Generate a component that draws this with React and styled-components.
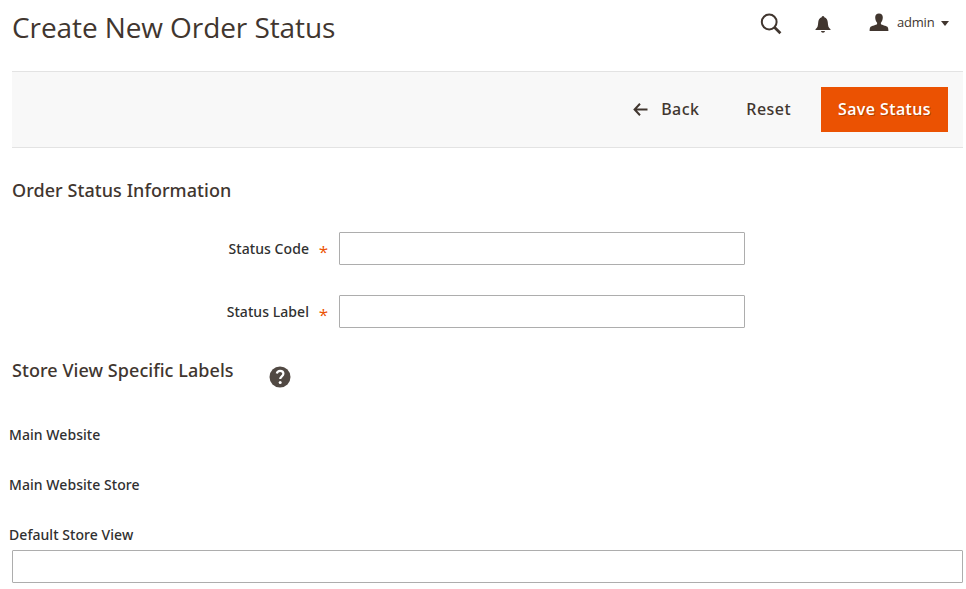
import React from 'react';
import styled, { createGlobalStyle } from 'styled-components';

const Global = createGlobalStyle`
  * { box-sizing: border-box; }
  body { margin: 0; background: #fff; color: #303030; font-family: "Open Sans", "Noto Sans", sans-serif; font-size: 14px; }
`;
const Page = styled.main`
  height: 589px;
  overflow: hidden;
  display: flex;
  flex-direction: column;
`;
const Header = styled.header`
  height: 71px;
  flex: none;
  display: flex;
  justify-content: space-between;
  padding: 0 17px 0 12px;
`;
const Title = styled.h1`
  margin: 7px 0 0;
  font-size: 28px;
  line-height: 40px;
  font-weight: 400;
  letter-spacing: -.09px;
  color: #41362f;
`;
const Tools = styled.div`
  display: flex;
  align-items: flex-start;
  padding-top: 13px;
  color: #41362f;
`;
const SearchIcon = styled.svg`
  width: 22px;
  height: 22px;
  margin-right: 33px;
`;
const BellIcon = styled.svg`
  width: 16px;
  height: 18px;
  margin: 3px 38px 0 0;
`;
const Admin = styled.div`
  display: flex;
  align-items: flex-start;
  font-size: 13px;
  line-height: 18px;
`;
const UserIcon = styled.svg`
  width: 20px;
  height: 18px;
  margin-right: 8px;
`;
const UserName = styled.span`
  width: 38px;
  font-weight: 400;
  letter-spacing: -.2px;
`;
const Caret = styled.svg`
  width: 8px;
  height: 5px;
  margin: 8px 0 0 6px;
`;
const Bar = styled.div`
  height: 77px;
  flex: none;
  margin: 0 3px 0 12px;
  padding-right: 15px;
  background: #f8f8f8;
  border-top: 1px solid #e3e3e3;
  border-bottom: 1px solid #e3e3e3;
  display: flex;
  align-items: center;
  justify-content: flex-end;
`;
const Action = styled.button`
  border: 0;
  background: none;
  padding: 0 0 2px;
  margin-right: ${p => p.$gap}px;
  font: 500 16px/24px "Noto Sans", sans-serif;
  letter-spacing: .45px;
  color: #41362f;
  display: flex;
  align-items: center;
`;
const BackArrow = styled.svg`
  width: 15px;
  height: 13px;
  margin: 1px 13px 0 0;
`;
const Save = styled(Action)`
  width: 127px;
  height: 45px;
  margin: 0;
  background: #eb5202;
  color: #fff;
  font-family: "Open Sans", sans-serif;
  font-weight: 600;
  letter-spacing: .4px;
  text-shadow: 1px 1px 0 rgba(0, 0, 0, .25);
  justify-content: center;
`;
const Section = styled.section`
  padding: 30px 3px 0 12px;
`;
const Heading = styled.h2`
  margin: 0;
  font-family: "Noto Sans", sans-serif;
  font-size: 18px;
  line-height: 24px;
  font-weight: 500;
  letter-spacing: .06px;
  color: #41362f;
`;
const Field = styled.label`
  display: flex;
  align-items: center;
  height: 33px;
  margin-top: 30px;
`;
const Name = styled.span`
  width: 297px;
  text-align: right;
  font-family: "Noto Sans", sans-serif;
  font-weight: 500;
  letter-spacing: .06px;
`;
const Star = styled.span`
  width: 30px;
  padding: 7px 1px 0 0;
  text-align: center;
  font-size: 17px;
  line-height: 20px;
  color: #eb5202;
`;
const Input = styled.input`
  display: block;
  width: ${p => p.$wide ? '100%' : '406px'};
  height: 33px;
  border: 1px solid #adadad;
  border-radius: 1px;
  background: #fff;
`;
const HeadingRow = styled.div`
  display: flex;
  align-items: flex-start;
`;
const HelpIcon = styled.svg`
  width: 22px;
  height: 22px;
  margin: 8px 0 0 35px;
`;
const StoreLabels = styled.div`
  display: grid;
  grid-auto-rows: 20px;
  row-gap: 30px;
  margin: 37px 0 5px -3px;
`;
const StoreLabel = styled.div`
  line-height: 20px;
  font-family: "Noto Sans", sans-serif;
  font-weight: 500;
  letter-spacing: .06px;
`;

export default function App() {
  return (
    <>
      <Global />
      <Page>
        <Header>
          <Title>Create New Order Status</Title>
          <Tools>
            <SearchIcon viewBox="0 0 22 22" fill="none" stroke="currentColor">
              <circle cx="9.2" cy="9" r="7.4" strokeWidth="2" />
              <path d="M14.4 14.2 20.4 20.200" strokeWidth="2.7" />
            </SearchIcon>
            <BellIcon viewBox="0 0 16 18" fill="currentColor">
              <path d="M8 0C6.9 0 6.7 1 6.7 1.3 4.3 2 3.4 4 3.2 6.4 3 10 2.5 11.5.5 13.3V14h15v-.7c-2-1.8-2.5-3.3-2.7-6.9-.2-2.4-1.1-4.4-3.5-5.1C9.3 1 9.1 0 8 0ZM6 15h4c-.2 1-.9 1.7-2 1.7S6.200 16 6 15Z" />
            </BellIcon>
            <Admin>
              <UserIcon viewBox="0 0 20 18" fill="currentColor">
                <path d="M10 .4C7.600.4 6.200 1.900 6.200 4.300c0 2.500.9 4.300 1.900 5.400v1.200c-.8 1.100-5.200 1.800-6.500 2.800C.9 14.300.600 16 .600 18h18.800c0-2-.3-3.700-1-4.300-1.300-1-5.700-1.700-6.500-2.800V9.700c1-1.100 1.900-2.900 1.900-5.400C13.800 1.900 12.400.4 10 .4Z" />
              </UserIcon>
              <UserName>admin</UserName>
              <Caret viewBox="0 0 8 5" fill="currentColor"><path d="M0 0h8L4 5Z" /></Caret>
            </Admin>
          </Tools>
        </Header>
        <Bar>
          <Action $gap={47}>
            <BackArrow viewBox="0 0 15 13" fill="none" stroke="currentColor" strokeWidth="2">
              <path d="M7 .8 1.600 6.500 7 12.200M1.800 6.500H14.500" />
            </BackArrow>
            Back
          </Action>
          <Action $gap={30}>Reset</Action>
          <Save>Save Status</Save>
        </Bar>
        <Section>
          <Heading>Order Status Information</Heading>
          <Field><Name>Status Code</Name><Star>*</Star><Input /></Field>
          <Field><Name>Status Label</Name><Star>*</Star><Input /></Field>
        </Section>
        <Section>
          <HeadingRow>
            <Heading>Store View Specific Labels</Heading>
            <HelpIcon viewBox="0 0 22 22">
              <circle cx="11" cy="11" r="10.500" fill="#514943" />
              <path d="M7.800 7.600C8.200 5.700 9.400 4.900 11.100 4.900c2 0 3.300 1.100 3.300 2.800 0 2.600-3.200 2.700-3.200 5.300" fill="none" stroke="#fff" strokeWidth="2.200" />
              <circle cx="11.200" cy="16.400" r="1.500" fill="#fff" />
            </HelpIcon>
          </HeadingRow>
          <StoreLabels>
            <StoreLabel>Main Website</StoreLabel>
            <StoreLabel>Main Website Store</StoreLabel>
            <StoreLabel>Default Store View</StoreLabel>
          </StoreLabels>
          <Input $wide />
        </Section>
      </Page>
    </>
  );
}
